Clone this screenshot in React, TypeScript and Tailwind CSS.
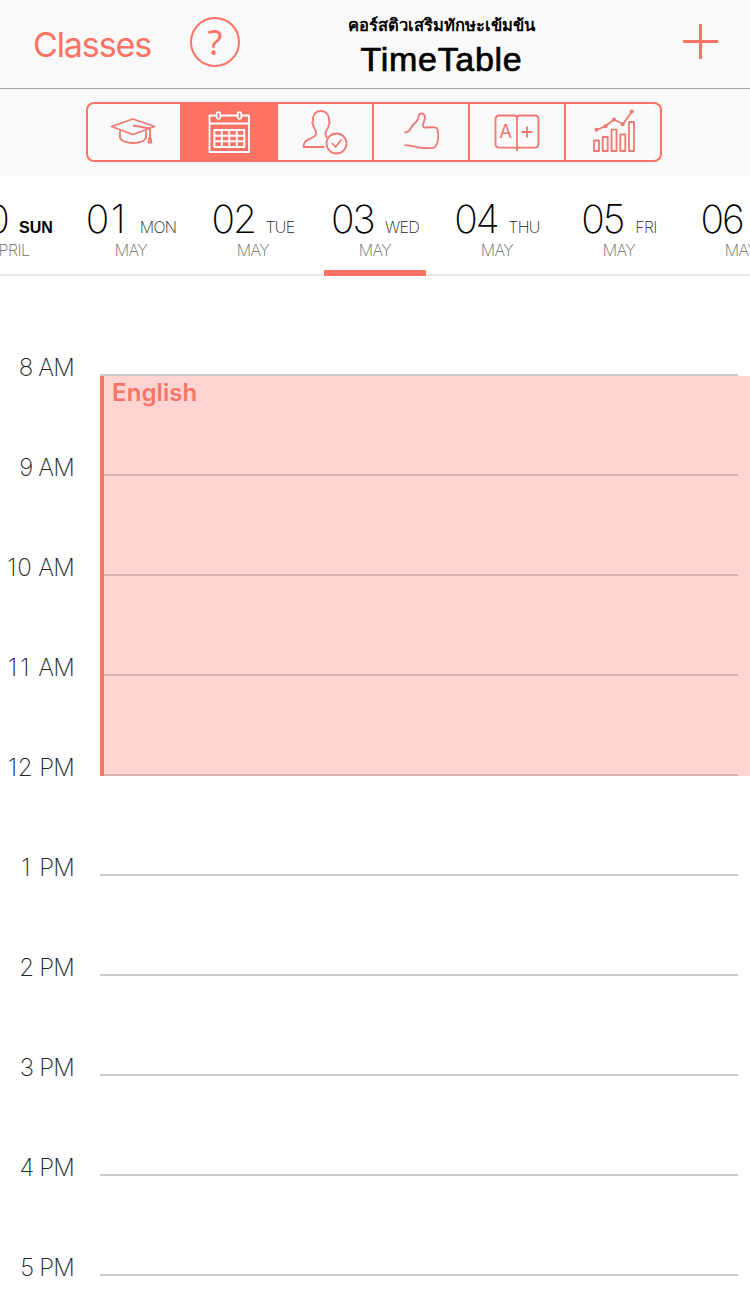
import type { ReactNode } from 'react'

interface Day {
  date: string
  weekday: string
  month: string
  selected?: boolean
  today?: boolean
}

const DAYS: Day[] = [
  { date: '30', weekday: 'SUN', month: 'APRIL', today: true },
  { date: '01', weekday: 'MON', month: 'MAY' },
  { date: '02', weekday: 'TUE', month: 'MAY' },
  { date: '03', weekday: 'WED', month: 'MAY', selected: true },
  { date: '04', weekday: 'THU', month: 'MAY' },
  { date: '05', weekday: 'FRI', month: 'MAY' },
  { date: '06', weekday: 'SAT', month: 'MAY' },
]

const HOURS = ['8 AM', '9 AM', '10 AM', '11 AM', '12 PM', '1 PM', '2 PM', '3 PM', '4 PM', '5 PM']

// the narrow "1" needs extra room so that the hours line up
const hourTracking = (value: string) => {
  if (value.endsWith('1')) {
    return 'tracking-[3px]'
  }
  if (value.startsWith('1')) {
    return 'tracking-[0.7px]'
  }
  return 'tracking-[-0.8px]'
}

const TABS: { id: string; icon: ReactNode }[] = [
  {
    id: 'classes',
    icon: (
      <>
        <path d="M111.500 126.500 133 119l21.500 7.500L133 134.500z" />
        <path d="M120 130.500v7.500c2 3.200 7 5 13 5s11-1.800 13-5v-7.500M133 125.500l17 3V138" />
        <path d="M149.200 138h1.300l1 4.500h-3z" />
      </>
    ),
  },
  {
    id: 'timetable',
    icon: (
      <>
        <path d="M216.500 115.500H209.500v36.500h39.500V115.500h-7.500M220.500 115.500h17M209.500 123.500h39.500" />
        <rect x="216.700" y="112.200" width="3.600" height="6.600" rx="1.500" />
        <rect x="237.700" y="112.200" width="3.600" height="6.600" rx="1.500" />
        <path d="M214.300 130h30v17h-30zM221.800 130v17M229.300 130v17M236.800 130v17M214.300 135.700h30M214.300 141.300h30" strokeWidth="2" />
      </>
    ),
  },
  {
    id: 'attendance',
    icon: (
      <>
        <path d="M324.500 147H303.500c0-4 2-6.300 5.500-7.800 4-1.800 7.300-3 7.300-5.700 0-2-.6-3-1.600-4.500-1-1.500-1.400-3-1.700-5-.8-.7-.8-2 0-3-.5-6 2.500-10 7.800-10s8.700 4 8.200 10c.8 1 .8 2.300 0 3-.3 2.500-.8 4-2 5.500-1.200 1.800-1.600 3-1.500 5 .1 1.500.6 2.200 1.500 3" />
        <circle cx="336.500" cy="143.500" r="10" />
        <path d="m332 143.200 3.500 3.800 6-7.500" />
      </>
    ),
  },
  {
    id: 'behavior',
    icon: (
      <path d="M404.500 132.500c4 0 5.200-2 6.800-5 1.400-2.600 2.700-3.800 4.700-5.500 1.800-1.700 2.200-3.400 2.600-5.500.4-2.300 1.700-3.300 3.400-3 2.200.4 3.200 2.400 2.800 5-.3 2.400-1.400 3.800-1.800 6-.4 2.100.2 3.100 2 3 4-.3 6.500-.4 9.500-.1 2.600.3 3.700 2.200 3.100 4.600 1 1.500 1.100 3.200.4 4.900.6 1.800.4 3.300-.7 4.700.2 2-.3 3.300-1.500 4.200-.5 1.500-1.600 2.100-3.700 2.300-4 .2-8 .1-12-.4-5-.7-8-2.500-15.600-2.600" />
    ),
  },
  {
    id: 'grades',
    icon: (
      <>
        <path d="M517 151v-2.500c-.8-.5-1.500-.8-2.500-.8h-15c-2.500 0-4-1.500-4-3.700v-24.500c0-2.500 1.500-4 4-4h14.500c2 0 3 1 3 3 0-2 1-3 3-3h14.500c2.500 0 4 1.500 4 4V144c0 2.200-1.500 3.700-4 3.700h-15c-1 0-1.700.3-2.500.8M517 118v31M527 126.500v11M521.500 132h11" />
        <text x="505.700" y="138.300" textAnchor="middle" fontSize="18.500" fill="currentColor" stroke="none">A</text>
      </>
    ),
  },
  {
    id: 'reports',
    icon: (
      <>
        <path d="M594 140.500h5V151h-5zM602.700 137h5v14h-5zM611.500 129.700h5V151h-5zM620.300 134.300h5V151h-5zM629 122h5v29h-5z" />
        <path d="m596 130 9-3.500 9-7 9 4.500 9-12.500" />
        <g fill="currentColor" stroke="none">
          <circle cx="596.500" cy="129.800" r="2" />
          <circle cx="605.500" cy="126.300" r="2" />
          <circle cx="614" cy="119.500" r="2" />
          <circle cx="622.700" cy="124.200" r="2" />
          <circle cx="631.800" cy="111.500" r="2" />
        </g>
      </>
    ),
  },
]

const VIEW_BOXES = ['88 104 92 56', '182 104 94 56', '278 104 94 56', '374 104 94 56', '470 104 94 56', '566 104 94 56']

function NavBar() {
  return (
    <header className="flex h-[89px] shrink-0 items-start border-b border-[#a9a9a9] text-[#fc7365]">
      <button className="ml-[33px] mt-[24px] w-[118px] text-left text-[34px] leading-[41px] tracking-[-1.1px] whitespace-nowrap">
        Classes
      </button>
      <button className="ml-[39px] mt-[17px] flex size-[50px] items-center justify-center rounded-full border-2 border-[#fc7365] font-['Noto_Sans',sans-serif] text-[34px] leading-none">
        ?
      </button>
      <div className="ml-[61px] flex w-[281px] flex-col items-center text-black">
        <div className="mt-[11px] h-[29px] text-[16.5px] leading-[28px] font-semibold whitespace-nowrap">คอร์สติวเสริมทักษะเข้มข้น</div>
        <h1 className="font-['Liberation_Sans',sans-serif] text-[34px] leading-[38px] tracking-[0.7px] [-webkit-text-stroke:0.7px_black]">
          TimeTable
        </h1>
      </div>
      <button className="ml-auto mr-[32px] mt-[24px]" aria-label="Add">
        <svg width="35" height="35" viewBox="0 0 35 35" stroke="currentColor" strokeWidth="3">
          <path d="M17.500 0v35M0 17.500h35" />
        </svg>
      </button>
    </header>
  )
}

function TabBar() {
  return (
    <nav className="flex h-[87px] shrink-0 items-start pt-[13px] pl-[86px]">
      <div className="flex h-[60px] w-[576px] overflow-hidden rounded-[8px] border-2 border-[#fc7365]">
        {TABS.map(({ id, icon }, i) => (
          <button
            key={id}
            className={`flex h-full shrink-0 border-[#fc7365] ${i === 0 ? 'w-[94px]' : 'w-[96px]'} ${
              i < TABS.length - 1 ? 'border-r-2' : ''
            } ${id === 'timetable' ? 'bg-[#fe7264] text-white' : 'text-[#f07872]'}`}
          >
            <svg
              viewBox={VIEW_BOXES[i]}
              className={`h-[56px] shrink-0 ${i === 0 ? 'w-[92px]' : 'w-[94px]'}`}
              fill="none"
              stroke="currentColor"
              strokeWidth="1.800"
              strokeLinejoin="round"
            >
              {icon}
            </svg>
          </button>
        ))}
      </div>
    </nav>
  )
}

function DayStrip() {
  return (
    <div className="flex h-[100px] shrink-0 justify-center border-b-2 border-[#e6e6e6] bg-white">
      {DAYS.map((day) => (
        <div key={day.date} className="flex w-[122px] shrink-0 flex-col items-center">
          <div className="mt-[20px] flex h-[45px] items-baseline gap-[11px] whitespace-nowrap">
            <span
              className={`w-[43px] text-[39px] leading-[46px] font-extralight text-black ${
                day.date.endsWith('1') ? 'tracking-[1.5px]' : 'tracking-[-2px]'
              }`}
            >
              {day.date}
            </span>
            <span
              className={`text-[16px] ${
                day.today ? "font-['Liberation_Sans',sans-serif] font-bold text-black" : 'font-extralight tracking-[-0.7px] text-[#222]'
              }`}
            >
              {day.weekday}
            </span>
          </div>
          <div className="text-[16px] leading-[18px] font-extralight tracking-[-0.5px] text-[#666]">{day.month}</div>
          {day.selected && <div className="mt-[11px] h-[6px] w-[102px] shrink-0 bg-[#fc7365]" />}
        </div>
      ))}
    </div>
  )
}

function Schedule() {
  return (
    <main className="relative flex grow flex-col overflow-hidden bg-white pt-[78px]">
      {HOURS.map((hour) => {
        const [value, meridiem] = hour.split(' ')
        return (
          <div key={hour} className="flex h-[100px] shrink-0 items-start">
            <div className="w-[74px] text-right text-[24px] leading-[28px] font-extralight tracking-[-0.8px] whitespace-nowrap text-[#222]">
              <span className={hourTracking(value)}>{value}</span> {meridiem}
            </div>
            <div className="mt-[20px] ml-[26px] h-[2px] w-[638px] bg-[#c9c8cb]" />
          </div>
        )
      })}
      <div className="absolute top-[100px] right-0 left-[100px] h-[400px] border-l-4 border-[#f67567] bg-[#ff7062]/30 bg-clip-padding pl-[8px]">
        <div className="text-[24px] leading-[34px] font-semibold tracking-[0.1px] text-[#f67569]">English</div>
      </div>
    </main>
  )
}

export default function App() {
  return (
    <div className="flex h-[1294px] w-[750px] flex-col overflow-hidden bg-[#f9f9f9] font-['Inter','Noto_Sans',sans-serif]">
      <NavBar />
      <TabBar />
      <DayStrip />
      <Schedule />
    </div>
  )
}
